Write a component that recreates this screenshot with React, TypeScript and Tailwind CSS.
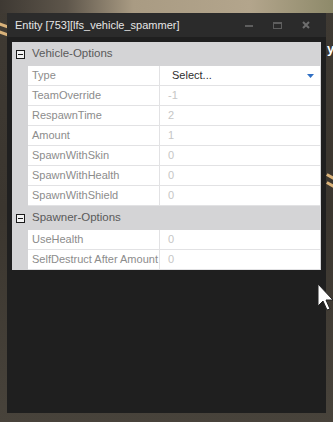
type Prop = { label: string; value: string; select?: boolean };

const vehicleProps: Prop[] = [
  { label: 'Type', value: 'Select...', select: true },
  { label: 'TeamOverride', value: '-1' },
  { label: 'RespawnTime', value: '2' },
  { label: 'Amount', value: '1' },
  { label: 'SpawnWithSkin', value: '0' },
  { label: 'SpawnWithHealth', value: '0' },
  { label: 'SpawnWithShield', value: '0' },
];

const spawnerProps: Prop[] = [
  { label: 'UseHealth', value: '0' },
  { label: 'SelfDestruct After Amount', value: '0' },
];

function CategoryHeader({ title }: { title: string }) {
  return (
    <div className="flex h-[24px] items-center">
      <div className="ml-[4px] flex h-[9px] w-[9px] items-center justify-center border border-[#1a1a1a] bg-[#f2f2f2]">
        <div className="h-px w-[5px] bg-[#1a1a1a]" />
      </div>
      <span className="ml-[7px] whitespace-nowrap text-[11.5px] text-[#5a5a5a]">{title}</span>
    </div>
  );
}

function PropertyRow({ label, value, select }: Prop) {
  return (
    <div className="ml-[16px] flex h-[20px] border-b border-[#e2e2e4] bg-white">
      <div className="flex w-[132px] items-center whitespace-nowrap border-r border-[#e2e2e4] pl-[4px] text-[11px] text-[#8c8c8c]">
        {label}
      </div>
      {select ? (
        <div className="flex flex-1 items-center justify-between pr-[6px] pl-[12px] text-[11px] text-[#2e2e2e]">
          <span>{value}</span>
          <svg width="7" height="4" viewBox="0 0 7 4">
            <path d="M0 0h7L3.5 4z" fill="#2f6fc4" />
          </svg>
        </div>
      ) : (
        <div className="flex flex-1 items-center pl-[8px] text-[11px] text-[#c6c6c6]">{value}</div>
      )}
    </div>
  );
}

function Cursor() {
  return (
    <svg className="absolute left-[317px] top-[283px]" width="18" height="28" viewBox="0 0 18 28">
      <path d="M1 1v22l5-5 4 9 3-1-4-9h7z" fill="#fff" stroke="#222" strokeWidth="1" />
    </svg>
  );
}

export default function App() {
  return (
    <div
      className="relative h-[422px] w-[333px] overflow-hidden bg-[linear-gradient(180deg,#3f3a33_0%,#3b362f_50%,#48433b_100%)] pt-[13px] pl-[7px]"
      style={{ fontFamily: '"Liberation Sans", Arial, sans-serif' }}
    >
      {/* scene behind the window */}
      <div className="absolute left-0 top-0 h-[13px] w-[333px] bg-[linear-gradient(90deg,#3e3933_0%,#5e564b_20%,#a99b83_40%,#b3a58c_75%,#8e8a6a_100%)]" />
      <div className="absolute left-[-6px] top-[24px] h-[3px] w-[20px] rotate-[20deg] bg-[#d9b27a]" />
      <div className="absolute left-[-6px] top-[32px] h-[3px] w-[20px] rotate-[20deg] bg-[#d9b27a]" />
      <div className="absolute left-[326px] top-[176px] h-[3px] w-[12px] rotate-[30deg] bg-[#d9b27a]" />
      <div className="absolute left-[326px] top-[184px] h-[3px] w-[12px] rotate-[30deg] bg-[#d9b27a]" />
      <div className="absolute left-[327px] top-[42px] text-[13px] leading-none font-bold text-white">y</div>

      <div className="relative flex h-[400px] w-[319px] flex-col bg-[#1f1f1f]">
        <div className="flex h-[24px] items-center justify-between bg-[#2b2b2b] pl-[8px] pr-[16px]">
          <span className="whitespace-nowrap text-[11px] text-[#e6e6e6]">Entity [753][lfs_vehicle_spammer]</span>
          <div className="flex items-center gap-[20px]">
            <div className="mt-[2px] h-[2px] w-[8px] bg-[#5e5e5e]" />
            <div className="h-[7px] w-[9px] border border-t-2 border-[#5e5e5e]" />
            <svg width="8" height="8" viewBox="0 0 8 8">
              <path d="M1 1l6 6M7 1L1 7" stroke="#6e6e6e" strokeWidth="2" />
            </svg>
          </div>
        </div>

        <div className="px-[5px] pt-[5px]">
          <div className="w-[309px] bg-[#d4d4d6] pr-[1px]">
            <CategoryHeader title="Vehicle-Options" />
            {vehicleProps.map((p) => (
              <PropertyRow key={p.label} {...p} />
            ))}
            <CategoryHeader title="Spawner-Options" />
            {spawnerProps.map((p) => (
              <PropertyRow key={p.label} {...p} />
            ))}
          </div>
        </div>
      </div>

      <Cursor />
    </div>
  );
}
